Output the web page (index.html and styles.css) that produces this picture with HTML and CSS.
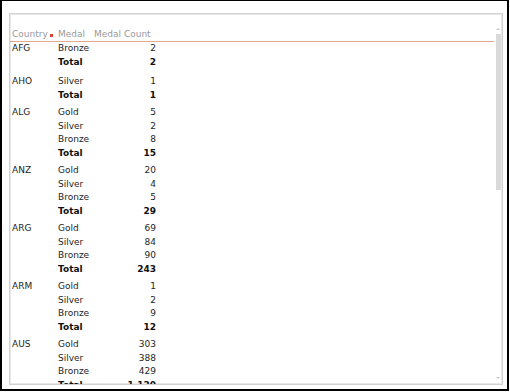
FILE: index.html
```html
<!DOCTYPE html>
<html>
<head>
<meta charset="utf-8">
<link rel="stylesheet" href="styles.css">
</head>
<body>
<div class="frame">
  <div class="panel">
    <div class="table">
      <div class="row head">
        <span class="c-country">Country<i class="sort"></i></span>
        <span class="c-medal">Medal</span>
        <span class="c-hcount">Medal Count</span>
      </div>
      <div class="body">
        <div class="group">
          <div class="row"><span>AFG</span><span>Bronze</span><span class="num">2</span></div>
          <div class="row total"><span></span><span>Total</span><span class="num">2</span></div>
        </div>
        <div class="group">
          <div class="row"><span>AHO</span><span>Silver</span><span class="num">1</span></div>
          <div class="row total"><span></span><span>Total</span><span class="num">1</span></div>
        </div>
        <div class="group">
          <div class="row"><span>ALG</span><span>Gold</span><span class="num">5</span></div>
          <div class="row"><span></span><span>Silver</span><span class="num">2</span></div>
          <div class="row"><span></span><span>Bronze</span><span class="num">8</span></div>
          <div class="row total"><span></span><span>Total</span><span class="num">15</span></div>
        </div>
        <div class="group">
          <div class="row"><span>ANZ</span><span>Gold</span><span class="num">20</span></div>
          <div class="row"><span></span><span>Silver</span><span class="num">4</span></div>
          <div class="row"><span></span><span>Bronze</span><span class="num">5</span></div>
          <div class="row total"><span></span><span>Total</span><span class="num">29</span></div>
        </div>
        <div class="group">
          <div class="row"><span>ARG</span><span>Gold</span><span class="num">69</span></div>
          <div class="row"><span></span><span>Silver</span><span class="num">84</span></div>
          <div class="row"><span></span><span>Bronze</span><span class="num">90</span></div>
          <div class="row total"><span></span><span>Total</span><span class="num">243</span></div>
        </div>
        <div class="group">
          <div class="row"><span>ARM</span><span>Gold</span><span class="num">1</span></div>
          <div class="row"><span></span><span>Silver</span><span class="num">2</span></div>
          <div class="row"><span></span><span>Bronze</span><span class="num">9</span></div>
          <div class="row total"><span></span><span>Total</span><span class="num">12</span></div>
        </div>
        <div class="group">
          <div class="row"><span>AUS</span><span>Gold</span><span class="num">303</span></div>
          <div class="row"><span></span><span>Silver</span><span class="num">388</span></div>
          <div class="row"><span></span><span>Bronze</span><span class="num">429</span></div>
          <div class="row total"><span></span><span>Total</span><span class="num">1,120</span></div>
        </div>
      </div>
    </div>
    <div class="scrollbar">
      <span class="arrow up"></span>
      <span class="thumb"></span>
      <span class="spacer"></span>
      <span class="arrow down"></span>
    </div>
  </div>
</div>
</body>
</html>
```
FILE: styles.css
```css
html, body {
  margin: 0;
  padding: 0;
  background: #fff;
}
.frame {
  box-sizing: border-box;
  width: 509px;
  height: 391px;
  border: 2px solid #000;
  border-top-width: 1px;
  padding: 12px 4px 4px 7px;
  display: flex;
  font-family: "DejaVu Sans", Verdana, sans-serif;
  font-size: 9px;
  color: #1e1e1e;
}
.panel {
  flex: 1;
  display: flex;
  border: 1px solid #d2d2d2;
  box-shadow: inset 0 0 0 1px #e8e8e8;
  overflow: hidden;
}
.table {
  flex: 1;
  padding-top: 14px;
  overflow: hidden;
}
.row {
  display: grid;
  grid-template-columns: 46px 52px 46px;
  padding-left: 2px;
  line-height: 13.5px;
  white-space: nowrap;
}
.row.head {
  grid-template-columns: 46px 36px 62px;
  line-height: 13px;
  color: #9a9a9a;
  border-bottom: 1px solid #e3a796;
}
.c-country {
  display: flex;
  align-items: center;
  gap: 2px;
}
.sort {
  width: 3px;
  height: 3px;
  background: #d8442c;
  margin-top: 1px;
}
.group {
  padding-bottom: 4px;
}
.group:first-child {
  padding-bottom: 6px;
}
.num {
  text-align: right;
}
.total {
  font-weight: bold;
  color: #111;
}
.scrollbar {
  width: 8px;
  display: flex;
  flex-direction: column;
  align-items: center;
  padding: 14px 0 5px;
}
.arrow {
  width: 0;
  height: 0;
  border-left: 2px solid transparent;
  border-right: 2px solid transparent;
}
.arrow.up {
  border-bottom: 2px solid #c8c8c8;
}
.arrow.down {
  border-top: 2px solid #c8c8c8;
}
.thumb {
  width: 5px;
  height: 156px;
  margin-top: 4px;
  background: #dadada;
}
.spacer {
  flex: 1;
}
```
